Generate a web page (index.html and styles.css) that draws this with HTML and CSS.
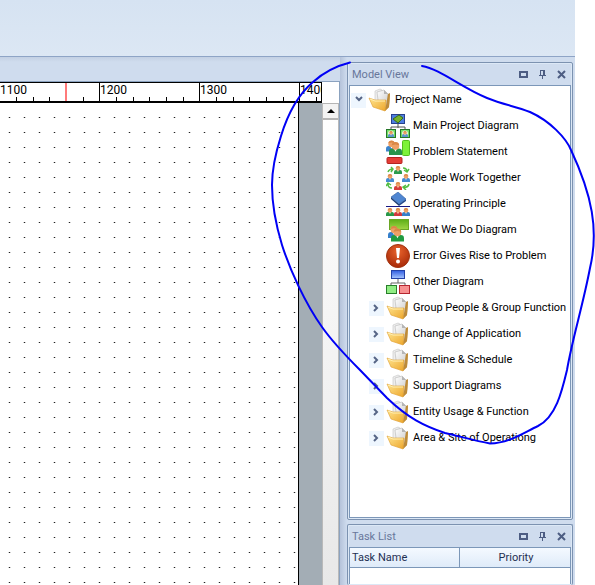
FILE: index.html
```
<!DOCTYPE html>
<html lang="en">
<head>
<meta charset="utf-8">
<title>Model View</title>
<link rel="stylesheet" href="styles.css">
</head>
<body>
<svg class="defs" aria-hidden="true">
  <defs>
    <linearGradient id="gFold" x1="0" y1="0" x2="1" y2="1"><stop offset="0" stop-color="#ffe58f"/><stop offset="1" stop-color="#eda62b"/></linearGradient>
    <linearGradient id="gBack" x1="0" y1="0" x2="1" y2="1"><stop offset="0" stop-color="#f6cf6a"/><stop offset="1" stop-color="#b77b22"/></linearGradient>
    <linearGradient id="gPage" x1="0" y1="0" x2="1" y2="1"><stop offset="0" stop-color="#fff"/><stop offset="1" stop-color="#c9c9c9"/></linearGradient>
    <linearGradient id="gBlue" x1="0" y1="0" x2="0" y2="1"><stop offset="0" stop-color="#2f5be0"/><stop offset="1" stop-color="#a9c8ff"/></linearGradient>
    <linearGradient id="gGreen" x1="0" y1="0" x2="0" y2="1"><stop offset="0" stop-color="#5cae18"/><stop offset="1" stop-color="#a2d646"/></linearGradient>
    <radialGradient id="gErr" cx=".5" cy=".3" r=".7"><stop offset="0" stop-color="#e8622c"/><stop offset="1" stop-color="#a82a08"/></radialGradient>
    <symbol id="folder" viewBox="0 0 24 24">
      <path d="m16 7 6-1-1 13-4 4z" fill="url(#gBack)"/>
      <path d="M7 3 12 1l2 1 1 14H7z" fill="#eee" stroke="#c4c4c4" stroke-width=".6"/>
      <path d="m9 4 7-2 4 4v12l-9 2z" fill="url(#gPage)" stroke="#b5b5b5" stroke-width=".6"/>
      <path d="m16 2v4h4z" fill="#b5b5b5"/>
      <path d="m20 6 2-1-1 14-4 4z" fill="#bd8b3a"/>
      <path d="m1 10 6 2h11l-1 11L5 19z" fill="url(#gFold)" stroke="#df9e30" stroke-width=".6"/>
      <path d="m2 11 5 2h10" fill="none" stroke="#fff0b5"/>
    </symbol>
    <symbol id="person" viewBox="0 0 8 8">
      <path d="M0 8V6q0-2 2-2h4q2 0 2 2v2z" fill="currentColor"/>
      <path d="m3 4 1 2 1-2z" fill="#fff"/>
      <circle cx="4" cy="2.500" r="2.300" fill="#eda066"/>
      <path d="M1.700 2Q2 0 4 0t2.300 2L4 1.500z" fill="#d98746"/>
    </symbol>
    <symbol id="i-main" viewBox="0 0 24 24">
      <path d="M12 10v4M5 16v-3h14v3" fill="none" stroke="#555"/>
      <rect x="5.500" y=".5" width="13" height="9" fill="#4e7ee0" stroke="#27408d"/>
      <path d="m7 5 6-4 4 3-5 5z" fill="#75b32c" stroke="#396b18"/>
      <rect x=".5" y="15.500" width="9" height="8" fill="#70df63" stroke="#267629"/>
      <rect x="14.500" y="15.500" width="9" height="8" fill="#70df63" stroke="#267629"/>
      <circle cx="5" cy="19.500" r="3" fill="#e5f2d8"/><circle cx="19" cy="19.500" r="3" fill="#e5f2d8"/>
      <use href="#person" x="2" y="17" width="6" height="6" color="#5b94cc"/>
      <use href="#person" x="16" y="17" width="6" height="6" color="#5b94cc"/>
    </symbol>
    <symbol id="i-problem" viewBox="0 0 24 24">
      <rect x="16.500" y=".5" width="7" height="15" rx="1" fill="#7df238" stroke="#53bd1e"/>
      <use href="#person" x="0" y="0" width="11" height="12" color="#3b83cc"/>
      <use href="#person" x="3" y="1" width="13" height="15" color="#27944b"/>
      <rect x="1" y="17.500" width="15" height="6" rx="1" fill="#e43d35" stroke="#b42320"/>
    </symbol>
    <symbol id="i-people" viewBox="0 0 24 24">
      <use href="#person" x="8" y="0" width="8" height="8" color="#2c9b4d"/>
      <use href="#person" x="0" y="8" width="8" height="8" color="#458bd2"/>
      <use href="#person" x="16" y="8" width="8" height="8" color="#458bd2"/>
      <use href="#person" x="8" y="16" width="8" height="8" color="#d63c3c"/>
      <path d="M2 6q1-3 5-3M5 1l2 2-2 3M17 2q4 0 4 4M18 4l3 2 2-3M6 22q-4 0-4-4M0 20l2-3 3 2M23 18q-1 4-5 3M20 19l-3 2 3 3" fill="none" stroke="#52bd42" stroke-width="1.500"/>
    </symbol>
    <symbol id="i-oper" viewBox="0 0 24 24">
      <path d="m5 5 8 7v2L5 7z" fill="#1d3d74"/><path d="m13 12 7-5v2l-7 5z" fill="#24498a"/>
      <path d="m5 5 7-5 8 7-7 5z" fill="#4f86d2" stroke="#34609f" stroke-width=".6"/>
      <path d="M0 14.500h24" stroke="#171782"/>
      <use href="#person" x="0" y="16" width="8" height="8" color="#289748"/>
      <use href="#person" x="8" y="16" width="8" height="8" color="#d0383d"/>
      <use href="#person" x="16" y="16" width="8" height="8" color="#367fc9"/>
    </symbol>
    <symbol id="i-what" viewBox="0 0 24 24">
      <rect x="3.500" y="1.500" width="19" height="10" fill="url(#gGreen)" stroke="#6aa624"/>
      <use href="#person" x="2" y="8" width="12" height="12" color="#347fcb"/>
      <use href="#person" x="5" y="10" width="13" height="14" color="#209a40"/>
    </symbol>
    <symbol id="i-error" viewBox="0 0 24 24">
      <circle cx="12" cy="12" r="11.500" fill="url(#gErr)" stroke="#a23410"/>
      <path d="M10 4h4l-1 10h-2z" fill="#fff"/><circle cx="12" cy="17.500" r="2" fill="#fff"/>
    </symbol>
    <symbol id="i-other" viewBox="0 0 24 24">
      <path d="M12 9v4M5 16v-3h14v3" fill="none" stroke="#666"/>
      <rect x="5.500" y=".5" width="13" height="8" fill="url(#gBlue)" stroke="#2441a7"/>
      <rect x=".5" y="15.500" width="10" height="8" fill="#91ed84" stroke="#297f2b"/>
      <rect x="13.500" y="15.500" width="10" height="8" fill="#f79191" stroke="#b62630"/>
    </symbol>
    <symbol id="chev" viewBox="0 0 14 14"><path d="m4 4 3 3-3 3" fill="none" stroke="#566586" stroke-width="2"/></symbol>
    <symbol id="t-max" viewBox="0 0 9 9"><path d="M0 1h9v7H0zm2 2v3h5V3z" fill="#4d5d83" fill-rule="evenodd"/></symbol>
    <symbol id="t-pin" viewBox="0 0 9 9"><path d="M2 0h5v5h1v1H5v3H4V6H1V5h1zm1 1v4h2V1z" fill="#4d5d83" fill-rule="evenodd"/></symbol>
    <symbol id="t-close" viewBox="0 0 9 9"><path d="m1 1 7 7M8 1 1 8" stroke="#4d5d83" stroke-width="2"/></symbol>
    <symbol id="ticks" viewBox="0 0 100 4"><path d="M16 0h1v4h-1zM33 0h1v4h-1zM49 0h1v4h-1zM66 0h1v4h-1zM83 0h1v4h-1z"/></symbol>
  </defs>
</svg>

<div class="app">
  <header class="ribbon"></header>
  <div class="workspace">
    <main class="editor">
      <div class="ruler">
        <div class="scale">
          <div class="unit">1100<svg class="ticks"><use href="#ticks"/></svg><span class="marker"></span></div>
          <div class="unit">1200<svg class="ticks"><use href="#ticks"/></svg></div>
          <div class="unit">1300<svg class="ticks"><use href="#ticks"/></svg></div>
          <div class="unit rest">1400<svg class="ticks"><use href="#ticks"/></svg></div>
        </div>
      </div>
      <div class="canvas">
        <div class="page"></div>
        <div class="outside"></div>
        <div class="scrollbar">
          <button class="up" aria-label="Scroll up"><svg width="8" height="4" viewBox="0 0 8 4"><path d="M0 4 4 0l4 4z"/></svg></button>
        </div>
      </div>
    </main>
    <aside class="side">
      <section class="panel model">
        <div class="bar"><h2>Model View</h2>
          <button aria-label="Maximize"><svg><use href="#t-max"/></svg></button>
          <button aria-label="Pin"><svg><use href="#t-pin"/></svg></button>
          <button aria-label="Close"><svg><use href="#t-close"/></svg></button>
        </div>
        <div class="content">
          <ul class="tree">
            <li class="root"><button class="exp open" aria-label="Collapse"><svg><use href="#chev"/></svg></button><svg class="icon"><use href="#folder"/></svg><span>Project Name</span></li>
            <li class="leaf"><svg class="icon"><use href="#i-main"/></svg><span>Main Project Diagram</span></li>
            <li class="leaf"><svg class="icon"><use href="#i-problem"/></svg><span>Problem Statement</span></li>
            <li class="leaf"><svg class="icon"><use href="#i-people"/></svg><span>People Work Together</span></li>
            <li class="leaf"><svg class="icon"><use href="#i-oper"/></svg><span>Operating Principle</span></li>
            <li class="leaf"><svg class="icon"><use href="#i-what"/></svg><span>What We Do Diagram</span></li>
            <li class="leaf"><svg class="icon"><use href="#i-error"/></svg><span>Error Gives Rise to Problem</span></li>
            <li class="leaf"><svg class="icon"><use href="#i-other"/></svg><span>Other Diagram</span></li>
            <li><button class="exp" aria-label="Expand"><svg><use href="#chev"/></svg></button><svg class="icon"><use href="#folder"/></svg><span>Group People &amp; Group Function</span></li>
            <li><button class="exp" aria-label="Expand"><svg><use href="#chev"/></svg></button><svg class="icon"><use href="#folder"/></svg><span>Change of Application</span></li>
            <li><button class="exp" aria-label="Expand"><svg><use href="#chev"/></svg></button><svg class="icon"><use href="#folder"/></svg><span>Timeline &amp; Schedule</span></li>
            <li><button class="exp" aria-label="Expand"><svg><use href="#chev"/></svg></button><svg class="icon"><use href="#folder"/></svg><span>Support Diagrams</span></li>
            <li><button class="exp" aria-label="Expand"><svg><use href="#chev"/></svg></button><svg class="icon"><use href="#folder"/></svg><span>Entity Usage &amp; Function</span></li>
            <li><button class="exp" aria-label="Expand"><svg><use href="#chev"/></svg></button><svg class="icon"><use href="#folder"/></svg><span>Area &amp; Site of Operationg</span></li>
          </ul>
        </div>
      </section>
      <section class="panel tasks">
        <div class="bar"><h2>Task List</h2>
          <button aria-label="Maximize"><svg><use href="#t-max"/></svg></button>
          <button aria-label="Pin"><svg><use href="#t-pin"/></svg></button>
          <button aria-label="Close"><svg><use href="#t-close"/></svg></button>
        </div>
        <div class="content">
          <table><thead><tr><th class="name">Task Name</th><th class="prio">Priority</th></tr></thead></table>
        </div>
      </section>
    </aside>
  </div>
</div>
<svg class="ink" width="595" height="585" viewBox="0 0 595 585" aria-hidden="true">
  <path d="M350 62.500C336 66 323 73 313 82 300 93 289 110 281 136 275 155 272 170 272 185 272 204 275 222 282 245 290 270 305 303 322 327 334 344 347 357 360 370L387 398C408 418 424 426 445 433 462 437 477 441 490 443.500 509 443 523 433 538 426 556 417 562 391 567 370 572 340 583 305 590 268 599 230 592 195 571 150 566 138 550 121 530 112 515 106 504 105 487 98 462 88 440 69 422 66"/>
</svg>
</body>
</html>
```
FILE: styles.css
```
* { box-sizing: border-box; }
body {
  margin: 0;
  height: 100vh;
  overflow: hidden;
  position: relative;
  background: #fff;
  font: 11px/14px Roboto, "Liberation Sans", sans-serif;
  color: #000;
}
button { margin: 0; padding: 0; border: 0; background: none; display: flex; align-items: center; justify-content: center; }
.defs { position: absolute; width: 0; height: 0; }
.app { height: 100%; margin-right: 20px; display: flex; flex-direction: column; background: #cfdcee; }
.ribbon { height: 57px; flex: none; background: linear-gradient(#d6e3f2, #dce7f4); border-bottom: 1px solid #8ea4c6; }
.workspace { flex: 1; min-height: 0; display: flex; background: linear-gradient(#c3d0e3, #cfdcee 5px); }

.editor { flex: 1; min-width: 0; margin-top: 24px; display: flex; flex-direction: column; border-top: 1px solid #8ba2bf; border-right: 1px solid #8ba2bf; background: #fff; }
.ruler { height: 21px; flex: none; padding-right: 17px; }
.scale { height: 100%; display: flex; overflow: hidden; border: solid #000; border-width: 1px 1px 2px 0; font-size: 12px; line-height: 15px; }
.unit { position: relative; flex: none; width: 100px; border-right: 1px solid #000; }
.unit.rest { flex: 1; min-width: 0; overflow: hidden; border: 0; }
.ticks { position: absolute; left: 0; bottom: 0; width: 100px; height: 4px; }
.marker { position: absolute; left: 65px; top: 0; bottom: 0; width: 2px; background: #ff7a7a; }
.canvas { flex: 1; min-height: 0; display: flex; }
.page {
  flex: 1;
  border-right: 1px solid #000;
  background:
    conic-gradient(from 270deg at 1px 1px, #222 90deg, transparent 0) 9px 14px / 15px 15px,
    conic-gradient(from 270deg at 3px 1px, #d0d0d0 90deg, transparent 0) 8px 14px / 15px 15px;
}
.outside { width: 23px; background: #a3adb5; }
.scrollbar { width: 17px; border: solid #b9b9b9; border-width: 0 1px; background: linear-gradient(#fff, #e8e8e8); }
.up { width: 100%; height: 17px; border: 1px solid #b5b5b5; border-width: 1px 0 2px; background: #f3f3f3; }

.side { width: 235px; flex: none; padding: 5px 2px 0 7px; display: flex; flex-direction: column; gap: 4px; background: linear-gradient(90deg, #b5c3da, #cfdcee 7px); }
.panel { border: 1px solid #7c92b0; border-radius: 2px; padding: 1px; display: flex; flex-direction: column; background: #cfdcee; box-shadow: inset 0 0 0 1px #dce8f6; }
.model { height: 458px; flex: none; }
.tasks { flex: 1; border-bottom: 0; }
.bar { height: 21px; flex: none; display: flex; align-items: center; padding: 0 3px; gap: 5px; }
.bar h2 { flex: 1; margin: 0; font: inherit; color: #68779b; }
.bar button { width: 14px; height: 14px; }
.bar svg { width: 9px; height: 9px; }
.content { flex: 1; border: 1px solid #7c97b8; background: #fff; }
.tasks .content { border-bottom: 0; }

.tree { list-style: none; margin: 0; padding: 1px 0 0; }
.tree li { height: 26px; display: flex; align-items: center; padding-left: 19px; white-space: nowrap; }
.tree .root { padding-left: 1px; }
.tree .leaf { padding-left: 36px; }
.exp { width: 15px; height: 15px; background: #eef6fe; margin-right: 2px; }
.exp svg { width: 14px; height: 14px; }
.exp.open svg { transform: rotate(90deg); }
.icon { width: 24px; height: 24px; margin-right: 3px; flex: none; }

table { width: 100%; border-collapse: separate; border-spacing: 0; }
th { height: 20px; padding: 0 0 0 2px; font-weight: normal; color: #1e2f52; border-bottom: 1px solid #7c97b8; background: linear-gradient(#f4f9ff, #dfebf9); }
.name { width: 110px; text-align: left; border-right: 1px solid #7c97b8; }
.prio { text-align: center; }

.ink { position: absolute; left: 0; top: 0; pointer-events: none; }
.ink path { fill: none; stroke: #0000f5; stroke-width: 2; stroke-linecap: round; }
```
